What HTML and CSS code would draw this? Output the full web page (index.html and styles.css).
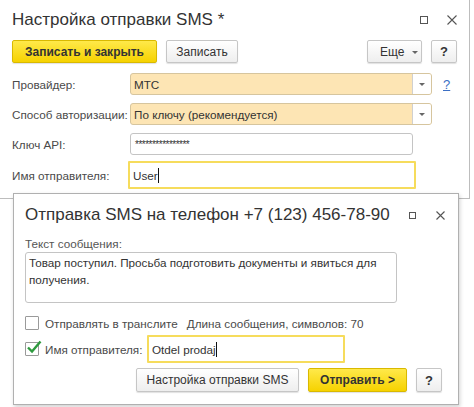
FILE: index.html
```html
<!DOCTYPE html>
<html lang="ru">
<head>
    <meta charset="UTF-8">
    <title>Настройка отправки SMS</title>
    <link rel="stylesheet" href="styles.css">
</head>
<body>
    <div class="desk">
        <div class="win main">
            <div class="win-head">
                <h1 class="win-title">Настройка отправки SMS *</h1>
                <div class="win-ctrl">
                    <span class="ic-max"></span>
                    <svg class="ic-close" width="10" height="10" viewBox="0 0 10 10"><path d="M0.5 0.5L9.5 9.5M9.5 0.5L0.5 9.5" stroke="#555" stroke-width="1.1" fill="none"/></svg>
                </div>
            </div>
            <div class="toolbar">
                <button class="btn btn-main">Записать и закрыть</button>
                <button class="btn btn-save">Записать</button>
                <span class="spacer"></span>
                <button class="btn btn-more">Еще <span class="caret"></span></button>
                <button class="btn btn-help">?</button>
            </div>
            <div class="row">
                <span class="lbl">Провайдер:</span>
                <div class="field orange f-select">
                    <span class="val">МТС</span>
                    <span class="drop"><span class="caret"></span></span>
                </div>
                <a class="hint">?</a>
            </div>
            <div class="row">
                <span class="lbl">Способ авторизации:</span>
                <div class="field orange f-select">
                    <span class="val">По ключу (рекомендуется)</span>
                    <span class="drop"><span class="caret"></span></span>
                </div>
            </div>
            <div class="row">
                <span class="lbl">Ключ API:</span>
                <div class="field f-key">
                    <span class="val stars">****************</span>
                </div>
            </div>
            <div class="row row-focus">
                <span class="lbl">Имя отправителя:</span>
                <div class="field focus f-sender">
                    <span class="val">User<span class="cursor"></span></span>
                </div>
            </div>
        </div>

        <div class="win dlg">
            <div class="win-head">
                <h2 class="win-title">Отправка SMS на телефон +7 (123) 456-78-90</h2>
                <div class="win-ctrl">
                    <span class="ic-max small"></span>
                    <svg class="ic-close" width="9" height="9" viewBox="0 0 9 9"><path d="M0.5 0.5L8.5 8.5M8.5 0.5L0.5 8.5" stroke="#555" stroke-width="1.1" fill="none"/></svg>
                </div>
            </div>
            <div class="cap">Текст сообщения:</div>
            <div class="memo">Товар поступил. Просьба подготовить документы и явиться для<br>получения.</div>
            <div class="check-row">
                <span class="box"></span>
                <span class="check-lbl">Отправлять в транслите</span>
                <span class="len">Длина сообщения, символов: 70</span>
            </div>
            <div class="check-row sender-row">
                <span class="box">
                    <svg class="tick" width="16" height="14" viewBox="0 0 16 14"><path d="M2 7.5L6 11.5L14.5 1.5" stroke="#2e9a3e" stroke-width="2.4" fill="none"/></svg>
                </span>
                <span class="check-lbl">Имя отправителя:</span>
                <div class="field focus f-from">
                    <span class="val">Otdel prodaj<span class="cursor"></span></span>
                </div>
            </div>
            <div class="dlg-buttons">
                <button class="btn btn-setup">Настройка отправки SMS</button>
                <button class="btn btn-main btn-send">Отправить &gt;</button>
                <button class="btn btn-help">?</button>
            </div>
        </div>
    </div>
</body>
</html>
```

FILE: styles.css
```css
body {
    margin: 0;
    font-family: "Liberation Sans", Arial, sans-serif;
    font-size: 11.7px;
    color: #333;
    background-color: #fff;
}
.desk {
    position: relative;
    width: 474px;
    height: 407px;
    overflow: hidden;
}
.win {
    box-sizing: border-box;
    background-color: #fff;
}
.main {
    width: 470px;
    height: 199px;
    border-right: 1px solid #bdbdbd;
    border-bottom: 1px solid #bdbdbd;
    padding: 0 12px 0 12px;
}
.win-head {
    display: flex;
    align-items: center;
}
.main .win-head {
    padding-top: 9px;
}
.win-title {
    flex: 1;
    margin: 0;
    font-size: 17px;
    font-weight: normal;
    line-height: 22px;
    color: #333;
    white-space: nowrap;
}
.win-ctrl {
    display: flex;
    align-items: center;
}
.ic-max {
    display: block;
    box-sizing: border-box;
    width: 8px;
    height: 8px;
    border: 1.5px solid #555;
    margin-right: 19px;
}
.ic-max.small {
    width: 7px;
    height: 7px;
    margin-right: 20px;
}
.ic-close {
    display: block;
}

/* buttons */
.toolbar {
    display: flex;
    align-items: center;
    gap: 9px;
    margin-top: 9px;
    margin-bottom: 6px;
}
.spacer {
    flex: 1;
}
.btn {
    box-sizing: border-box;
    height: 23px;
    padding: 0 8px;
    font-family: inherit;
    font-size: 12px;
    color: #333;
    white-space: nowrap;
    background: linear-gradient(#ffffff, #eeeeee);
    border: 1px solid #c6c6c6;
    border-radius: 2px;
    box-shadow: 0 1px 1px rgba(0, 0, 0, 0.12);
}
.btn-main {
    width: 145px;
    font-weight: bold;
    background: linear-gradient(#ffe94a, #f6d200);
    border-color: #d9b900;
}
.btn-save {
    width: 72px;
}
.btn-more {
    width: 55px;
    padding: 0 0 0 12px;
    text-align: left;
}
.btn-help {
    width: 26px;
    padding: 0;
    font-weight: bold;
    font-size: 13px;
}
.caret {
    display: inline-block;
    width: 0;
    height: 0;
    border-left: 3px solid transparent;
    border-right: 3px solid transparent;
    border-top: 3px solid #666;
    vertical-align: middle;
    margin-left: 4px;
}

/* form rows */
.row {
    display: flex;
    align-items: center;
    height: 30px;
}
.row-focus {
    height: 32px;
}
.lbl {
    width: 118px;
    color: #4a4a4a;
    white-space: nowrap;
}
.field {
    box-sizing: border-box;
    display: flex;
    align-items: center;
    height: 22px;
    border: 1px solid #c4c4c4;
    border-radius: 3px;
    background-color: #fff;
}
.val {
    flex: 1;
    padding-left: 3px;
    white-space: nowrap;
}
.orange {
    background-color: #fde5b4;
    border-color: #d6c59e;
}
.f-select {
    width: 302px;
    overflow: hidden;
}
.drop {
    display: flex;
    align-items: center;
    justify-content: center;
    width: 18px;
    height: 100%;
    background-color: #fff;
    border-left: 1px solid #d0d0d0;
}
.drop .caret {
    margin-left: 0;
}
.hint {
    margin-left: 11px;
    color: #3c6fc4;
    text-decoration: underline;
    font-size: 13px;
}
.f-key {
    width: 283px;
}
.stars {
    font-size: 10px;
    padding-left: 4px;
    letter-spacing: -0.5px;
}
.focus {
    height: 28px;
    border: 2px solid #f6dc5c;
    border-radius: 1px;
}
.f-sender {
    width: 288px;
    margin-left: -2px;
}
.cursor {
    display: inline-block;
    width: 1.5px;
    height: 15px;
    background-color: #111;
    vertical-align: -3px;
}

/* dialog */
.dlg {
    position: absolute;
    left: 13px;
    top: 193px;
    width: 446px;
    height: 212px;
    border: 1px solid #b0b0b0;
    padding: 10px 13px 0 11px;
    box-shadow: 1px 2px 4px rgba(0, 0, 0, 0.18);
}
.cap {
    margin-top: 10px;
    line-height: 15px;
    color: #555;
}
.memo {
    box-sizing: border-box;
    width: 372px;
    height: 51px;
    margin-top: 1px;
    padding: 1px 3px;
    border: 1px solid #c4c4c4;
    border-radius: 3px;
    line-height: 17px;
    white-space: nowrap;
}
.check-row {
    display: flex;
    align-items: center;
    height: 20px;
    margin-top: 10px;
}
.box {
    position: relative;
    box-sizing: border-box;
    width: 14px;
    height: 14px;
    border: 1px solid #9a9a9a;
    border-radius: 1px;
    background-color: #fff;
    margin-right: 6px;
}
.tick {
    position: absolute;
    left: 0;
    top: -3px;
}
.check-lbl {
    color: #4a4a4a;
    white-space: nowrap;
}
.len {
    margin-left: 9px;
    color: #4a4a4a;
    white-space: nowrap;
}
.sender-row {
    height: 28px;
    margin-top: 2px;
}
.sender-row .check-lbl {
    width: 102px;
}
.f-from {
    width: 198px;
}
.dlg-buttons {
    display: flex;
    justify-content: flex-end;
    gap: 9px;
    margin-top: 5px;
    margin-right: 3px;
}
.dlg-buttons .btn {
    height: 24px;
}
.btn-setup {
    width: 163px;
}
.btn-send {
    width: 99px;
}
```
